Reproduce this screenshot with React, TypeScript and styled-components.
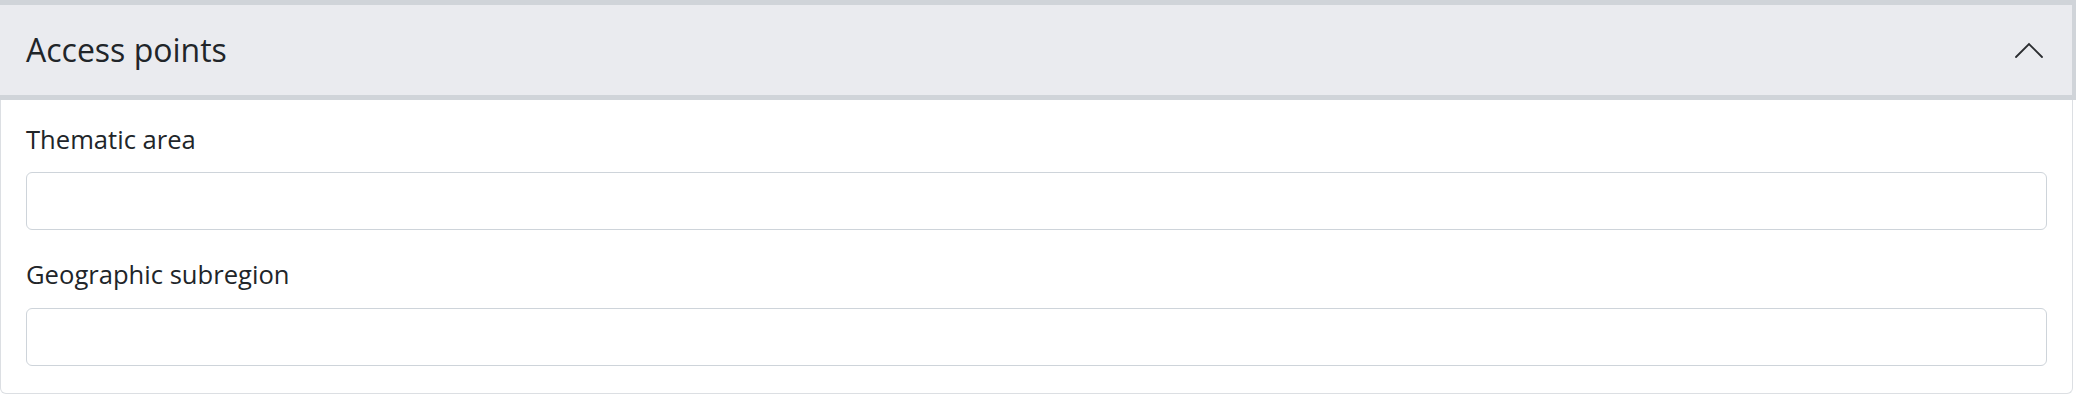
import React from "react";
import styled, { createGlobalStyle } from "styled-components";

const GlobalStyle = createGlobalStyle`
  html, body {
    margin: 0;
    padding: 0;
    background: #ffffff;
  }
  body {
    font-family: "Open Sans", "Noto Sans", sans-serif;
    color: #212529;
    overflow: hidden;
  }
  * { box-sizing: border-box; }
`;

const Card = styled.section`
  width: 2073px;
  height: 394px;
  border: 1px solid #dcdfe3;
  border-top: none;
  border-radius: 0 0 6px 6px;
  background: #ffffff;
  display: flex;
  flex-direction: column;
`;

const Header = styled.header`
  height: 100px;
  margin: 0 -4px 0 -1px;
  display: flex;
  align-items: center;
  justify-content: space-between;
  background: #eaebef;
  border-top: 5px solid #d0d4d9;
  border-bottom: 5px solid #d0d4d9;
  border-right: 4px solid #d0d4d9;
  padding: 0 29px 0 26px;
`;

const Title = styled.h2`
  margin: 0;
  font-size: 32px;
  font-weight: 400;
  line-height: 1.2;
  color: #212529;
`;

const ToggleButton = styled.button`
  border: none;
  background: transparent;
  padding: 0;
  width: 28px;
  height: 16px;
  display: flex;
  align-items: center;
  justify-content: center;
  cursor: pointer;
`;

const Body = styled.div`
  padding: 21px 25px 25px 25px;
  display: flex;
  flex-direction: column;
  gap: 26px;
`;

const Field = styled.div`
  display: flex;
  flex-direction: column;
`;

const Label = styled.label`
  font-size: 25.6px;
  line-height: 38.4px;
  margin-bottom: 13px;
  color: #212529;
`;

const Input = styled.input`
  height: 58px;
  width: 100%;
  border: 1px solid #ced4da;
  border-radius: 6px;
  padding: 6px 19px;
  font-family: inherit;
  font-size: 25.6px;
  color: #212529;
  background: #ffffff;
  outline: none;
`;

const ChevronUp = () => (
  <svg width="28" height="16" viewBox="0 0 28 16" fill="none">
    <path
      d="M1 15 L14 2 L27 15"
      stroke="#2b2d30"
      strokeWidth="1.8"
      strokeLinecap="round"
      strokeLinejoin="miter"
    />
  </svg>
);

export default function App() {
  return (
    <>
      <GlobalStyle />
      <Card>
        <Header>
          <Title>Access points</Title>
          <ToggleButton aria-label="Collapse">
            <ChevronUp />
          </ToggleButton>
        </Header>
        <Body>
          <Field>
            <Label htmlFor="thematic">Thematic area</Label>
            <Input id="thematic" type="text" />
          </Field>
          <Field>
            <Label htmlFor="subregion">Geographic subregion</Label>
            <Input id="subregion" type="text" />
          </Field>
        </Body>
      </Card>
    </>
  );
}
